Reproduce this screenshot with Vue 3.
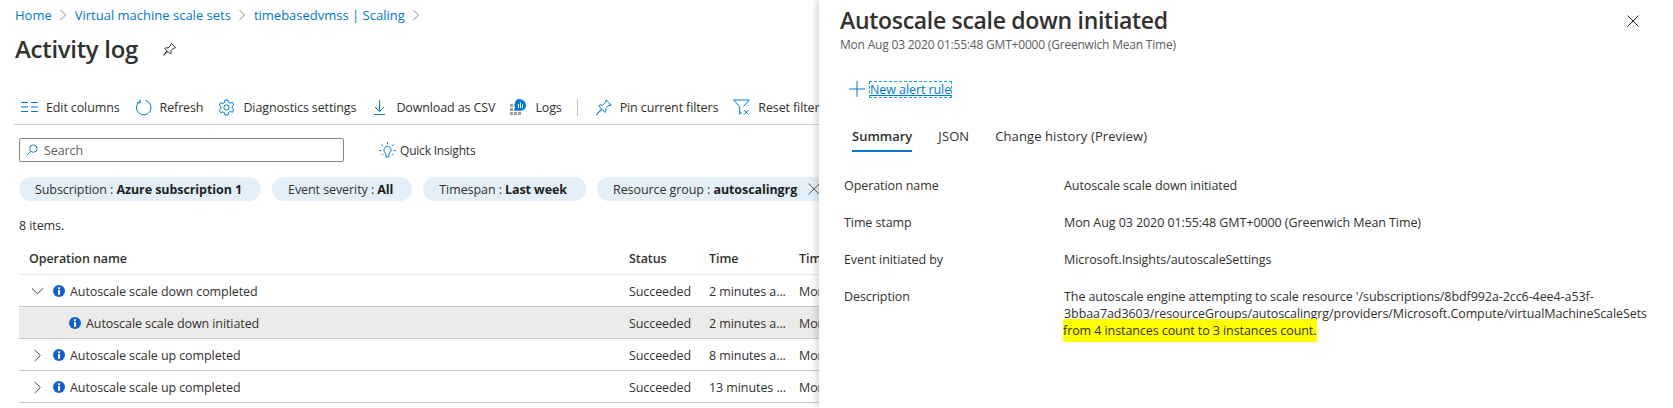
<script setup>
const chips = [
  { k: 'Subscription', v: 'Azure subscription 1' },
  { k: 'Event severity', v: 'All' },
  { k: 'Timespan', v: 'Last week' },
  { k: 'Resource group', v: 'autoscalingrg', x: true }
]
const rows = [
  { name: 'Autoscale scale down completed', time: '2 minutes a...', chev: 'down' },
  { name: 'Autoscale scale down initiated', time: '2 minutes a...', sel: true },
  { name: 'Autoscale scale up completed', time: '8 minutes a...', chev: 'right' },
  { name: 'Autoscale scale up completed', time: '13 minutes ...', chev: 'right' }
]
const props = [
  { k: 'Operation name', v: 'Autoscale scale down initiated' },
  { k: 'Time stamp', v: 'Mon Aug 03 2020 01:55:48 GMT+0000 (Greenwich Mean Time)' },
  { k: 'Event initiated by', v: 'Microsoft.Insights/autoscaleSettings' }
]
</script>

<template>
  <div class="page">
    <section class="left">
      <nav class="crumbs">
        <a>Home</a><svg class="sep" viewBox="0 0 8 12"><path d="M1.5 1l5 5-5 5" /></svg>
        <a>Virtual machine scale sets</a><svg class="sep" viewBox="0 0 8 12"><path d="M1.5 1l5 5-5 5" /></svg>
        <a>timebasedvmss | Scaling</a><svg class="sep" viewBox="0 0 8 12"><path d="M1.5 1l5 5-5 5" /></svg>
      </nav>
      <div class="title-row">
        <h1>Activity log</h1>
        <svg class="pin" viewBox="0 0 16 16"><path d="M10 1.5l4.5 4.5-1 .6-1-.3-3 3 .3 2.4-1 1-2.4-2.6L1.8 14.2 5.400 9.500 2.900 7.100l1-1 2.500.3 3-3-.3-1z" /></svg>
      </div>
      <div class="toolbar">
        <button class="tool">
          <svg class="ic" viewBox="0 0 17 17"><path d="M0 3.500h7M0 8h7M0 12.500h7M10 3.500h7M10 8h7M10 12.500h7" /></svg>Edit columns
        </button>
        <button class="tool">
          <svg class="ic" viewBox="0 0 17 17"><path d="M5 2.300A7.300 7.300 0 1 0 10.500 1.500M5.200 0.500v3.300H1.800" /></svg>Refresh
        </button>
        <button class="tool">
          <svg class="ic" viewBox="0 0 17 17"><circle cx="8.500" cy="8.500" r="2.600" /><path d="M7 1h3l.5 2.200 1.800.9 2.100-.8 1.400 2.500-1.600 1.500v2l1.600 1.500-1.400 2.500-2.100-.8-1.800.9L10 16H7l-.5-2.200-1.800-.9-2.100.8L1.200 11.200l1.600-1.500v-2L1.200 6.200l1.400-2.500 2.100.8 1.800-.9z" /></svg>Diagnostics settings
        </button>
        <button class="tool">
          <svg class="ic" viewBox="0 0 17 17"><path d="M8.500 1v11M4 8l4.500 4.500L13 8M3 15.500h11" /></svg>Download as CSV
        </button>
        <button class="tool">
          <svg class="ic logs" viewBox="0 0 17 17">
            <path class="g" d="M0 5h3v3H0zM4 5h3v3H4zM0 9h3v3H0zM4 9h3v3H4zM8 9h3v3H8zM0 13h3v3H0zM4 13h3v3H4zM8 13h3v3H8z" />
            <path class="b" d="M9 0a7 7 0 0 1 7 6.500c0 2.500-2 5-5 5-1 0-1.500 0-2 0H5V4a4.500 4.500 0 0 1 4-4z" />
            <path class="w" d="M8 5h1v4H8zM10 3.500h1V9h-1zM12 5.500h1V9h-1z" />
          </svg>Logs
        </button>
        <span class="divider"></span>
        <button class="tool">
          <svg class="ic" viewBox="0 0 17 17"><path d="M11 .8l5.200 5.200-1.100.6-1.100-.3-3.300 3.300.3 2.700-1.100 1.100-2.800-3L1 16l5.600-6.100L3.700 7l1.100-1.100 2.700.3 3.300-3.300-.3-1.100z" /></svg>Pin current filters
        </button>
        <button class="tool">
          <svg class="ic" viewBox="0 0 17 17"><path d="M.7 1h15.600l-5.800 6.500M.7 1l6 6.700V15l2-1.500M11 11l4.500 4.500M15.500 11L11 15.500" /></svg>Reset filters
        </button>
      </div>
      <div class="search-row">
        <label class="search">
          <svg class="glass" viewBox="0 0 13 13"><circle cx="8" cy="5" r="4" /><path d="M5 8l-4 4" /></svg>
          <span>Search</span>
        </label>
        <button class="insights">
          <svg class="bulb" viewBox="0 0 18 18"><path d="M9 4.500a4 4 0 0 0-2.500 7l1 1.500v3h3v-3l1-1.500a4 4 0 0 0-2.500-7zM9 0v2.500M2.500 2.500l1.800 1.800M15.500 2.500l-1.800 1.800M0 9h2.500M15.500 9H18M3 14l1.300-1.300M15 14l-1.300-1.300" /></svg>
          Quick Insights
        </button>
      </div>
      <div class="chips">
        <span v-for="c in chips" :key="c.k" class="chip" :class="{ 'chip-x': c.x }">
          <span class="chip-text">{{ c.k }} : <b>{{ c.v }}</b></span>
          <svg v-if="c.x" class="chip-close" viewBox="0 0 12 12"><path d="M.5.500l11 11M11.500.500l-11 11" /></svg>
        </span>
      </div>
      <div class="count">8 items.</div>
      <div class="table">
        <div class="tr th">
          <span class="c1">Operation name</span><span>Status</span><span>Time</span><span>Time stamp</span>
        </div>
        <div v-for="(r, i) in rows" :key="i" class="tr" :class="{ sel: r.sel }">
          <span class="c1 namecell" :class="{ nested: r.sel }">
            <svg v-if="r.chev" class="chev" viewBox="0 0 14 14">
              <path v-if="r.chev === 'down'" d="M1 3.500l6 6 6-6" />
              <path v-else d="M4 1l6 6-6 6" />
            </svg>
            <svg class="info" viewBox="0 0 12 12"><circle cx="6" cy="6" r="6" /><path d="M5 2.300h2v1.800H5zM5 5h2v4.800H5z" /></svg>
            {{ r.name }}
          </span>
          <span>Succeeded</span><span>{{ r.time }}</span><span>Mon Aug 03 2020</span>
        </div>
      </div>
    </section>

    <aside class="panel">
      <svg class="close" viewBox="0 0 12 12"><path d="M.5.500l11 11M11.500.500l-11 11" /></svg>
      <h2>Autoscale scale down initiated</h2>
      <div class="sub">Mon Aug 03 2020 01:55:48 GMT+0000 (Greenwich Mean Time)</div>
      <div class="cmd">
        <svg class="plus" viewBox="0 0 16 16"><path d="M8 0v16M0 8h16" /></svg>
        <a class="focus">New alert rule</a>
      </div>
      <div class="tabs">
        <span class="tab active">Summary</span>
        <span class="tab">JSON</span>
        <span class="tab">Change history (Preview)</span>
      </div>
      <div class="props">
        <div v-for="p in props" :key="p.k" class="prop">
          <span>{{ p.k }}</span><span>{{ p.v }}</span>
        </div>
        <div class="prop desc">
          <span>Description</span>
          <span>The autoscale engine attempting to scale resource '/subscriptions/8bdf992a-2cc6-4ee4-a53f-<br />3bbaa7ad3603/resourceGroups/autoscalingrg/providers/Microsoft.Compute/virtualMachineScaleSets<br /><mark>from 4 instances count to 3 instances count.</mark></span>
        </div>
      </div>
    </aside>
  </div>
</template>

<style>
html, body { margin: 0; background: #fff; }
</style>

<style scoped>
.page {
  display: flex;
  width: 1673px;
  height: 408px;
  overflow: hidden;
  font-family: "Open Sans", "Noto Sans", sans-serif;
  font-size: 12.5px;
  letter-spacing: -0.08px;
  color: #323130;
  background: #fff;
}
.left {
  width: 819px;
  flex: none;
  overflow: hidden;
  white-space: nowrap;
}
.crumbs {
  display: flex;
  align-items: center;
  height: 18px;
  margin: 6px 0 0 15px;
  font-size: 13px;
  letter-spacing: 0;
  color: #0078d4;
}
.sep { width: 8px; height: 12px; margin: 0 8px 0 7px; }
.sep path { fill: none; stroke: #8a8886; stroke-width: 1; }
.title-row {
  display: flex;
  align-items: center;
  height: 34px;
  margin: 8px 0 0 15px;
}
h1 {
  margin: 0;
  font-size: 24px;
  font-weight: 600;
  letter-spacing: -0.3px;
  line-height: 34px;
}
.pin { width: 15px; height: 15px; margin-left: 24px; }
.pin path { fill: none; stroke: #201f1e; stroke-width: 1; }
.toolbar {
  display: flex;
  align-items: center;
  height: 33px;
  margin: 25px 0 0 14px;
  border-bottom: 1px solid #d2d0ce;
  padding-left: 7px;
}
.tool {
  display: flex;
  flex: none;
  align-items: center;
  gap: 8px;
  margin-right: 15px;
  padding: 0;
  border: 0;
  background: none;
  font: inherit;
  letter-spacing: -0.12px;
  color: #323130;
  white-space: nowrap;
}
.ic { width: 17px; height: 17px; flex: none; }
.ic path, .ic circle { fill: none; stroke: #0078d4; stroke-width: 1; }
.ic .g { fill: #a19f9d; stroke: none; }
.ic .b { fill: #0078d4; stroke: none; }
.ic .w { fill: #fff; stroke: none; }
.divider { flex: none; width: 1px; height: 17px; background: #c8c6c4; margin-right: 17px; }
.search-row {
  display: flex;
  align-items: center;
  height: 24px;
  margin: 13px 0 0 19px;
}
.search {
  display: flex;
  align-items: center;
  width: 325px;
  height: 24px;
  box-sizing: border-box;
  border: 1px solid #8a8886;
  border-radius: 2px;
  padding-left: 6px;
  gap: 6px;
  color: #605e5c;
}
.glass { width: 12px; height: 12px; }
.glass circle, .glass path { fill: none; stroke: #0078d4; stroke-width: 1; }
.insights {
  display: flex;
  align-items: center;
  gap: 4px;
  margin-left: 35px;
  padding: 0;
  border: 0;
  background: none;
  font: inherit;
  font-size: 12px;
  letter-spacing: -0.2px;
  color: #323130;
}
.bulb { width: 17px; height: 17px; }
.bulb path { fill: none; stroke: #0078d4; stroke-width: 1; }
.chips {
  display: flex;
  gap: 11px;
  margin: 15px 0 0 19px;
}
.chip {
  display: flex;
  flex: none;
  align-items: center;
  height: 24px;
  padding: 0 19px 0 16px;
  border-radius: 12px;
  background: #e3f0fa;
}
.chip-x { padding-right: 8px; }
.chip b { font-weight: 700; color: #201f1e; }
.chip-close { width: 12px; height: 12px; margin-left: 11px; }
.chip-close path { fill: none; stroke: #605e5c; stroke-width: 1; }
.count { height: 16px; line-height: 16px; margin: 17px 0 0 19px; }
.table { margin: 9px 0 0 19px; }
.tr {
  display: grid;
  grid-template-columns: 610px 80px 90px 1fr;
  align-items: center;
  height: 30px;
  padding-top: 1px;
  border-bottom: 1px solid #c8c6c4;
}
.tr.th { font-weight: 600; border-bottom-color: #edebe9; box-sizing: border-box; height: 32px; padding: 0 0 1px; }
.sel { background: #edebe9; }
.c1 { padding-left: 10px; }
.namecell { display: flex; align-items: center; }
.nested { padding-left: 50px; }
.chev { width: 13px; height: 13px; margin: 0 9px 0 2px; flex: none; }
.chev path { fill: none; stroke: #323130; stroke-width: 1; }
.info { width: 12px; height: 12px; margin-right: 5px; flex: none; }
.info circle { fill: #0f62c9; }
.info path { fill: #fff; }
.panel {
  position: relative;
  z-index: 1;
  flex: 1;
  min-width: 0;
  padding-left: 21px;
  background: #fff;
  box-shadow: -2px 0 8px rgba(0, 0, 0, 0.18);
  white-space: nowrap;
}
.close {
  position: absolute;
  top: 15px;
  right: 34px;
  width: 12px;
  height: 12px;
}
.close path { fill: none; stroke: #201f1e; stroke-width: 1; }
h2 {
  margin: 4px 0 0;
  font-size: 23px;
  font-weight: 600;
  letter-spacing: -0.3px;
  line-height: 32px;
}
.sub { margin-top: 1px; font-size: 12px; letter-spacing: -0.2px; line-height: 16px; color: #605e5c; }
.cmd {
  display: flex;
  align-items: center;
  height: 18px;
  margin: 27px 0 0 9px;
  color: #0078d4;
}
.plus { width: 16px; height: 16px; margin-right: 5px; }
.plus path { fill: none; stroke: #0078d4; stroke-width: 1; }
.focus {
  outline: 1px dashed #0ea5e9;
  outline-offset: 0;
  text-decoration: underline;
  font-size: 12.5px;
  line-height: 15px;
  padding: 0;
}
.tabs {
  display: flex;
  gap: 26px;
  margin: 29px 0 0 12px;
  font-size: 13px;
  letter-spacing: 0.1px;
}
.tab { line-height: 18px; padding: 0 0 7px; }
.tab.active { font-weight: 600; letter-spacing: 0; border-bottom: 2px solid #0078d4; padding-bottom: 5px; }
.props { margin: 25px 0 0 4px; }
.prop {
  display: grid;
  grid-template-columns: 220px 1fr;
  height: 37px;
  line-height: 17px;
}
.desc { height: auto; }
mark { background: #ffff00; color: #323130; padding: 3px 1px 3px 0; margin-left: -1px; }
</style>
